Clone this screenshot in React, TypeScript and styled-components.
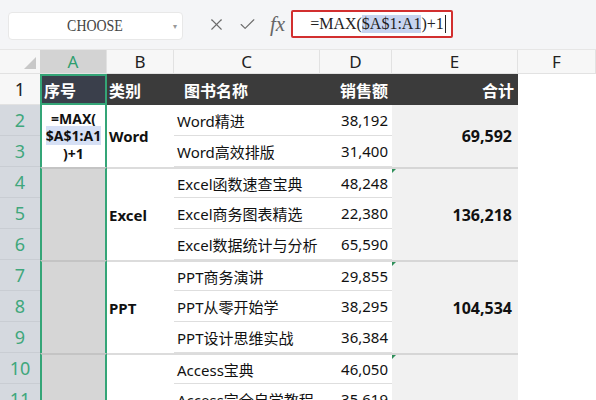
import styled, { createGlobalStyle } from 'styled-components';
import { X, Check } from 'lucide-react';

const GlobalStyle = createGlobalStyle`
  html, body {
    margin: 0;
    padding: 0;
    background: #ffffff;
    overflow: hidden;
  }
  body {
    font-family: "Noto Sans", "Noto Sans CJK SC", sans-serif;
  }
`;

type Book = { name: string; sales: string };
type Group = { type: string; total: string; books: Book[]; marker?: boolean };

const groups: Group[] = [
  { type: 'Word', total: '69,592', books: [
    { name: 'Word精进', sales: '38,192' },
    { name: 'Word高效排版', sales: '31,400' },
  ] },
  { type: 'Excel', total: '136,218', marker: true, books: [
    { name: 'Excel函数速查宝典', sales: '48,248' },
    { name: 'Excel商务图表精选', sales: '22,380' },
    { name: 'Excel数据统计与分析', sales: '65,590' },
  ] },
  { type: 'PPT', total: '104,534', marker: true, books: [
    { name: 'PPT商务演讲', sales: '29,855' },
    { name: 'PPT从零开始学', sales: '38,295' },
    { name: 'PPT设计思维实战', sales: '36,384' },
  ] },
  { type: '', total: '', marker: true, books: [
    { name: 'Access宝典', sales: '46,050' },
    { name: 'Access完全自学教程', sales: '35,619' },
  ] },
];

const letters = ['A', 'B', 'C', 'D', 'E', 'F'];

const App = () => {
  let row = 3;
  const cells: JSX.Element[] = [];
  groups.forEach((g, gi) => {
    const start = row;
    const span = g.books.length;
    const first = gi === 0;
    if (!first) {
      cells.push(<SelCell key={`a${gi}`} style={{ gridRow: `${start} / span ${span}`, gridColumn: 2 }} />);
    }
    cells.push(<TypeCell key={`b${gi}`} style={{ gridRow: `${start} / span ${span}`, gridColumn: 3 }} $first={first}>{g.type}</TypeCell>);
    g.books.forEach((b, bi) => {
      const r = start + bi;
      const top = bi === 0;
      cells.push(<NameCell key={`c${gi}${bi}`} style={{ gridRow: r, gridColumn: 4 }} $groupTop={top && !first}>{b.name}</NameCell>);
      cells.push(<SalesCell key={`d${gi}${bi}`} style={{ gridRow: r, gridColumn: 5 }} $groupTop={top && !first}>{b.sales}</SalesCell>);
      cells.push(<EmptyCell key={`f${gi}${bi}`} style={{ gridRow: r, gridColumn: 7 }} />);
    });
    cells.push(<TotalCell key={`e${gi}`} style={{ gridRow: `${start} / span ${span}`, gridColumn: 6 }} $first={first} $marker={!!g.marker}>{g.total}</TotalCell>);
    row += span;
  });

  return (
    <>
      <GlobalStyle />
      <Toolbar>
        <NameBox>
          <NameText>CHOOSE</NameText>
          <Caret>▾</Caret>
        </NameBox>
        <Actions>
          <X size={19} strokeWidth={1.4} />
          <Check size={19} strokeWidth={1.4} />
          <Fx>fx</Fx>
        </Actions>
        <FormulaArea>
          <FormulaBox>
            =MAX(<Ref>$A$1:A1</Ref>)+1<CaretLine />
          </FormulaBox>
        </FormulaArea>
      </Toolbar>
      <Sheet>
        <Corner />
        {letters.map((l, i) => (
          <ColHead key={l} $col={i + 2} $active={i === 0}>{l}</ColHead>
        ))}

        {Array.from({ length: 11 }, (_, i) => (
          <RowHead key={i} $row={i + 2} $active={i > 0}>{i + 1}</RowHead>
        ))}

        <HeadCell $col={2} $selected>序号</HeadCell>
        <HeadCell $col={3}>类别</HeadCell>
        <HeadCell $col={4} $pad={10}>图书名称</HeadCell>
        <HeadCell $col={5} $right>销售额</HeadCell>
        <HeadCell $col={6} $right>合计</HeadCell>
        <EmptyCell style={{ gridRow: 2, gridColumn: 7 }} />

        <FormulaCell>
          <span>=MAX(</span>
          <span><Hl>$A$1:A1</Hl></span>
          <span>)+1</span>
        </FormulaCell>
        {cells}
      </Sheet>
    </>
  );
};

const Toolbar = styled.div`
  height: 50px;
  background: #f4f5f7;
  display: flex;
  align-items: center;
  padding-left: 8px;
  box-sizing: border-box;
  border-bottom: 1px solid #e6e6e6;
`;

const NameBox = styled.div`
  width: 175px;
  height: 28px;
  box-sizing: border-box;
  background: #fff;
  border: 1px solid #e8e8e8;
  border-radius: 4px;
  display: flex;
  align-items: center;
  justify-content: center;
  position: relative;
  transform: translateY(1px);
`;

const NameText = styled.span`
  font-family: "Liberation Serif", serif;
  font-size: 17px;
  color: #444;
  transform: scaleX(0.82);
`;

const Caret = styled.span`
  position: absolute;
  right: 5px;
  top: 7px;
  font-size: 8px;
  color: #999;
`;

const Actions = styled.div`
  display: flex;
  align-items: center;
  gap: 12px;
  margin-left: 24px;
  color: #6b6b6b;
`;

const Fx = styled.span`
  font-family: "Liberation Serif", serif;
  font-style: italic;
  font-size: 21px;
  color: #666;
  margin-left: 1px;
`;

const FormulaArea = styled.div`
  flex: 1;
  align-self: stretch;
  display: flex;
  align-items: center;
  margin-left: 6px;
`;

const FormulaBox = styled.div`
  width: 162px;
  height: 28px;
  box-sizing: border-box;
  border: 2px solid #d22f2f;
  border-radius: 2px;
  background: #fff;
  display: flex;
  align-items: center;
  padding-left: 17px;
  font-family: "Liberation Serif", serif;
  font-size: 16px;
  color: #222;
  white-space: nowrap;
  transform: translateY(-1px);
`;

const Ref = styled.span`
  background: #c7d4f0;
`;

const CaretLine = styled.span`
  display: inline-block;
  width: 1px;
  height: 18px;
  background: #222;
  margin-left: 1px;
`;

const Sheet = styled.div`
  display: grid;
  grid-template-columns: 40px 67px 67px 146px 72px 126px 1fr;
  grid-template-rows: 24px repeat(11, 31px);
  background: #fff;
  font-size: 15px;
  color: #111;
`;

const Corner = styled.div`
  grid-row: 1;
  grid-column: 1;
  background: #f7f7f7;
  border-bottom: 1px solid #e2e2e2;
  position: relative;
  &::after {
    content: '';
    position: absolute;
    right: 4px;
    bottom: 4px;
    border-left: 12px solid transparent;
    border-bottom: 12px solid #c8c8c8;
  }
`;

const ColHead = styled.div<{ $col: number; $active?: boolean }>`
  grid-row: 1;
  grid-column: ${(p) => p.$col};
  display: flex;
  align-items: center;
  justify-content: center;
  font-size: 17px;
  background: ${(p) => (p.$active ? '#d3d3d3' : '#f7f7f7')};
  color: ${(p) => (p.$active ? '#2f9e6f' : '#222')};
  border-right: 1px solid #e2e2e2;
  border-bottom: 1px solid #e2e2e2;
`;

const RowHead = styled.div<{ $row: number; $active?: boolean }>`
  grid-row: ${(p) => p.$row};
  grid-column: 1;
  display: flex;
  align-items: center;
  justify-content: center;
  font-size: 18px;
  background: ${(p) => (p.$active ? '#d5d9df' : '#f7f7f7')};
  color: ${(p) => (p.$active ? '#3fa77c' : '#222')};
  border-bottom: 1px solid ${(p) => (p.$active ? '#c9cdd3' : '#e2e2e2')};
`;

const HeadCell = styled.div<{ $col: number; $selected?: boolean; $right?: boolean; $pad?: number }>`
  grid-row: 2;
  grid-column: ${(p) => p.$col};
  display: flex;
  align-items: center;
  justify-content: ${(p) => (p.$right ? 'flex-end' : 'flex-start')};
  padding: ${(p) => (p.$right ? '0 4px 0 0' : `0 0 0 ${p.$pad ?? 2}px`)};
  font-weight: 700;
  font-size: 16px;
  color: #fff;
  background: ${(p) => (p.$selected ? '#3a3f4b' : '#3b3b3b')};
  border: ${(p) => (p.$selected ? '2px solid #34a577' : 'none')};
  box-sizing: border-box;
`;

const FormulaCell = styled.div`
  grid-row: 3 / span 2;
  grid-column: 2;
  display: flex;
  flex-direction: column;
  align-items: center;
  justify-content: center;
  background: #fff;
  border-left: 2px solid #34a577;
  border-right: 2px solid #34a577;
  font-weight: 700;
  font-size: 14px;
  line-height: 17.5px;
  color: #111;
`;

const Hl = styled.span`
  background: #d6e0f5;
`;

const SelCell = styled.div`
  background: #d6d6d6;
  border-left: 2px solid #34a577;
  border-right: 2px solid #34a577;
  border-top: 2px solid #c4c4c4;
`;

const TypeCell = styled.div<{ $first: boolean }>`
  display: flex;
  align-items: center;
  padding-left: 2px;
  font-weight: 700;
  font-size: 15px;
  border-top: ${(p) => (p.$first ? 'none' : '2px solid #dcdcdc')};
`;

const NameCell = styled.div<{ $groupTop: boolean }>`
  display: flex;
  align-items: center;
  padding-left: 3px;
  white-space: nowrap;
  overflow: hidden;
  border-top: ${(p) => (p.$groupTop ? '2px solid #dcdcdc' : 'none')};
  border-bottom: 1px solid #dedede;
`;

const SalesCell = styled(NameCell)`
  justify-content: flex-end;
  padding-left: 0;
  padding-right: 4px;
`;

const TotalCell = styled.div<{ $first: boolean; $marker: boolean }>`
  position: relative;
  display: flex;
  align-items: center;
  justify-content: flex-end;
  padding-right: 6px;
  font-weight: 700;
  font-size: 16px;
  background: #f1f1f1;
  border-top: ${(p) => (p.$first ? 'none' : '2px solid #d6d6d6')};
  &::before {
    content: '';
    display: ${(p) => (p.$marker ? 'block' : 'none')};
    position: absolute;
    left: 0;
    top: 0;
    border-top: 4px solid #2f8f5a;
    border-right: 4px solid transparent;
  }
`;

const EmptyCell = styled.div`
  background: #fff;
`;

export default App;
